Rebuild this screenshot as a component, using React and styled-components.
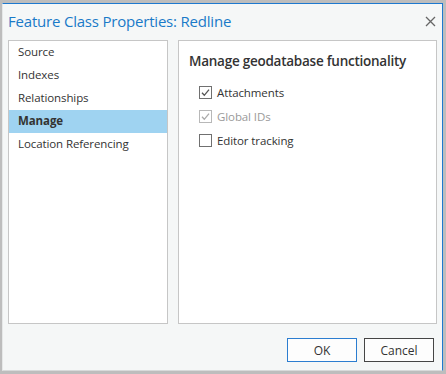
import React from "react";
import styled, { createGlobalStyle } from "styled-components";

const Global = createGlobalStyle`
  html, body { margin: 0; padding: 0; background: #bdbdbd; }
  body { width: 446px; height: 374px; overflow: hidden; font-family: "Open Sans", "Noto Sans", sans-serif; }
`;

const Frame = styled.div`
  padding: 3px 3px 3px 2px;
  width: 446px;
  height: 374px;
  box-sizing: border-box;
`;

const Dialog = styled.div`
  height: 100%;
  box-sizing: border-box;
  background: #f5f7f7;
  border-top: 1px solid #1e79cf;
  border-right: 1px solid #1e79cf;
  border-left: 1px solid #e6e8e8;
  border-bottom: 1px solid #d8dada;
  display: flex;
  flex-direction: column;
`;

const TitleBar = styled.div`
  height: 36px;
  display: flex;
  align-items: center;
  justify-content: space-between;
  padding: 0 5px 0 5px;
`;

const Title = styled.div`
  font-size: 15px;
  color: #1a7ac8;
  letter-spacing: -0.2px;
  margin-top: -2px;
`;

const Close = styled.button`
  border: none;
  background: none;
  padding: 0;
  width: 14px;
  height: 14px;
  display: flex;
  align-items: center;
  justify-content: center;
  margin-top: -1px;
`;

const Body = styled.div`
  display: flex;
  gap: 10px;
  padding: 0 4px 0 5px;
  height: 284px;
`;

const Panel = styled.div`
  background: #fff;
  border: 1px solid #c6c6c6;
  box-sizing: border-box;
  width: ${(p) => p.$w}px;
  height: 100%;
`;

const NavList = styled.div`
  display: flex;
  flex-direction: column;
`;

const NavItem = styled.div`
  height: 23px;
  line-height: 22px;
  padding-left: 9px;
  font-size: 11.5px;
  letter-spacing: -0.1px;
  color: #333;
  background: ${(p) => (p.$active ? "#9fd3f1" : "transparent")};
  font-weight: ${(p) => (p.$active ? 700 : 400)};
`;

const Content = styled.div`
  padding: 11px 10px;
`;

const Heading = styled.div`
  font-size: 13.5px;
  color: #333;
  font-weight: 600;
  letter-spacing: -0.25px;
  margin-bottom: 15px;
`;

const Options = styled.div`
  display: flex;
  flex-direction: column;
  gap: 10px;
  padding-left: 10px;
`;

const Option = styled.label`
  display: flex;
  align-items: center;
  gap: 5px;
  font-size: 11.5px;
  letter-spacing: -0.1px;
  height: 14px;
  color: ${(p) => (p.$disabled ? "#9a9a9a" : "#333")};
`;

const Box = styled.span`
  width: 11px;
  height: 11px;
  border: 1px solid ${(p) => (p.$disabled ? "#b8b8b8" : "#707070")};
  background: #fff;
  display: flex;
  align-items: center;
  justify-content: center;
  flex: none;
`;

const Footer = styled.div`
  flex: 1;
  display: flex;
  justify-content: flex-end;
  align-items: flex-start;
  gap: 7px;
  padding: 14px 8px 0 0;
`;

const Button = styled.button`
  width: 70px;
  height: 24px;
  box-sizing: border-box;
  background: #fdfdfd;
  border: 1px solid ${(p) => (p.$primary ? "#2b7dd0" : "#454545")};
  font-family: inherit;
  font-size: 12px;
  color: #333;
  padding: 0;
`;

const Check = ({ color }) => (
  <svg width="11" height="11" viewBox="0 0 11 11">
    <path d="M2 5.8 L4.3 8.3 L9 2.6" fill="none" stroke={color} strokeWidth="1.3" />
  </svg>
);

const nav = ["Source", "Indexes", "Relationships", "Manage", "Location Referencing"];

export default function App() {
  return (
    <>
      <Global />
      <Frame>
        <Dialog>
          <TitleBar>
            <Title>Feature Class Properties: Redline</Title>
            <Close aria-label="Close">
              <svg width="11" height="11" viewBox="0 0 11 11">
                <path d="M1 1 L10 10 M10 1 L1 10" stroke="#666" strokeWidth="1.3" />
              </svg>
            </Close>
          </TitleBar>
          <Body>
            <Panel $w={160}>
              <NavList>
                {nav.map((n) => (
                  <NavItem key={n} $active={n === "Manage"}>{n}</NavItem>
                ))}
              </NavList>
            </Panel>
            <Panel $w={259}>
              <Content>
                <Heading>Manage geodatabase functionality</Heading>
                <Options>
                  <Option>
                    <Box><Check color="#555" /></Box>
                    Attachments
                  </Option>
                  <Option $disabled>
                    <Box $disabled><Check color="#aaa" /></Box>
                    Global IDs
                  </Option>
                  <Option>
                    <Box />
                    Editor tracking
                  </Option>
                </Options>
              </Content>
            </Panel>
          </Body>
          <Footer>
            <Button $primary>OK</Button>
            <Button>Cancel</Button>
          </Footer>
        </Dialog>
      </Frame>
    </>
  );
}
